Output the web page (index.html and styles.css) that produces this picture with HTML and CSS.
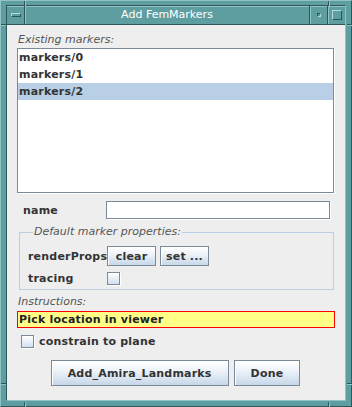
FILE: index.html
```html
<!DOCTYPE html>
<html lang="en">
<head>
    <meta charset="UTF-8">
    <title>Add FemMarkers</title>
    <link rel="stylesheet" href="styles.css">
</head>
<body>
    <div class="window">
        <div class="frame">
            <div class="titlebar">
                <div class="tb-btn tb-left"><span class="ico-min"></span></div>
                <div class="tb-title">Add FemMarkers</div>
                <div class="tb-btn"><span class="ico-dot"></span></div>
                <div class="tb-btn"><span class="ico-max"></span></div>
            </div>

            <div class="content">
                <div class="cap">Existing markers:</div>
                <div class="list">
                    <div class="item">markers/0</div>
                    <div class="item">markers/1</div>
                    <div class="item sel">markers/2</div>
                </div>

                <div class="row name-row">
                    <span class="lbl">name</span>
                    <span class="field"></span>
                </div>

                <fieldset class="group">
                    <legend>Default marker properties:</legend>
                    <div class="row">
                        <span class="lbl">renderProps</span>
                        <button class="btn small">clear</button>
                        <button class="btn small">set ...</button>
                    </div>
                    <div class="row tracing-row">
                        <span class="lbl">tracing</span>
                        <span class="chk"></span>
                    </div>
                </fieldset>

                <div class="cap instr">Instructions:</div>
                <div class="msg">Pick location in viewer</div>

                <div class="row plane-row">
                    <span class="chk"></span>
                    <span class="plain">constrain to plane</span>
                </div>

                <div class="actions">
                    <button class="btn big">Add_Amira_Landmarks</button>
                    <button class="btn big">Done</button>
                </div>
            </div>
        </div>

        <!-- resize corner marks on the frame -->
        <span class="tick v" style="left:23px; top:0"></span>
        <span class="tick v" style="left:327px; top:0"></span>
        <span class="tick v" style="left:23px; top:401px"></span>
        <span class="tick v" style="left:327px; top:401px"></span>
        <span class="tick h" style="left:0; top:23px"></span>
        <span class="tick h" style="left:346px; top:23px"></span>
        <span class="tick h" style="left:0; top:382px"></span>
        <span class="tick h" style="left:346px; top:382px"></span>
    </div>
</body>
</html>
```

FILE: styles.css
```css
body {
    margin: 0;
    background: #5f9ea0;
    font-family: "DejaVu Sans", sans-serif;
}
.window {
    position: relative;
    width: 352px;
    height: 407px;
    box-sizing: border-box;
    background: #5f9ea0;
    border: 1px solid;
    border-color: #92c3c4 #2d5758 #2d5758 #92c3c4;
    padding: 4px 5px 5px 5px;
    display: flex;
}
.frame {
    flex: 1;
    display: flex;
    flex-direction: column;
    border: 1px solid;
    border-color: #2d5758 #92c3c4 #92c3c4 #2d5758;
}
.titlebar {
    height: 19px;
    box-sizing: border-box;
    display: flex;
    border-bottom: 1px solid #2d5758;
}
.tb-btn {
    width: 17px;
    display: flex;
    align-items: center;
    justify-content: center;
    border-left: 1px solid #2d5758;
    box-shadow: inset 1px 1px 0 #92c3c4;
}
.tb-left {
    border-left: none;
    border-right: 1px solid #2d5758;
    box-shadow: inset 0 1px 0 #92c3c4;
}
.tb-title {
    flex: 1;
    text-align: center;
    color: #fff;
    font-family: "DejaVu Sans", sans-serif;
    font-size: 11px;
    line-height: 18px;
    box-shadow: inset 1px 1px 0 #92c3c4;
}
.ico-min {
    width: 10px;
    height: 4px;
    box-sizing: border-box;
    border: 1px solid;
    border-color: #b4dadb #2d5758 #2d5758 #b4dadb;
}
.ico-dot {
    width: 4px;
    height: 4px;
    box-sizing: border-box;
    border: 1px solid;
    border-color: #2d5758 #b4dadb #b4dadb #2d5758;
}
.ico-max {
    width: 10px;
    height: 10px;
    box-sizing: border-box;
    border: 1px solid;
    border-color: #b4dadb #2d5758 #2d5758 #b4dadb;
}
.tick {
    position: absolute;
    background: #2d5758;
}
.tick.v {
    width: 1px;
    height: 5px;
    box-shadow: 1px 0 0 #92c3c4;
}
.tick.h {
    width: 5px;
    height: 1px;
    box-shadow: 0 1px 0 #92c3c4;
}

.content {
    flex: 1;
    background: #eeeeee;
    padding: 7px 11px 0 10px;
    display: flex;
    flex-direction: column;
    color: #333;
    font-size: 11px;
    font-weight: bold;
    letter-spacing: 0.2px;
}
.cap {
    font-style: italic;
    font-weight: normal;
    font-size: 11px;
    line-height: 16px;
    letter-spacing: 0;
    color: #555;
    padding-left: 1px;
}
.list {
    height: 145px;
    box-sizing: border-box;
    background: #fff;
    border: 1px solid #7a8a99;
    box-shadow: 1px 1px 0 #fff;
}
.item {
    height: 17px;
    line-height: 17px;
    padding-left: 1px;
}
.item.sel {
    background: #b8cfe5;
}
.row {
    display: flex;
    align-items: center;
}
.lbl {
    box-sizing: border-box;
    width: 89px;
    padding-left: 6px;
}
.name-row {
    margin-top: 8px;
}
.field {
    width: 224px;
    height: 18px;
    box-sizing: border-box;
    background: #fff;
    border: 1px solid #7a8a99;
    box-shadow: 1px 1px 0 #fff;
}
.group {
    margin: 6px 0 0 2px;
    padding: 7px 0 2px 8px;
    border: 1px solid #b8cfe5;
}
.group legend {
    margin-left: 5px;
    padding: 0 1px;
    font-style: italic;
    font-weight: normal;
    font-size: 11px;
    line-height: 14px;
    letter-spacing: 0;
    color: #555;
}
.group .lbl {
    width: 79px;
    padding-left: 0;
}
.btn {
    font-family: "DejaVu Sans", sans-serif;
    font-weight: bold;
    font-size: 11px;
    letter-spacing: 0.2px;
    color: #333;
    border: 1px solid #7a8a99;
    border-radius: 0;
    background: linear-gradient(to bottom, #ffffff 0%, #eef3f9 40%, #c6d7e9 100%);
    box-shadow: inset 1px 1px 0 #fff;
    padding: 0;
}
.btn.small {
    width: 49px;
    height: 20px;
    margin-right: 4px;
}
.tracing-row {
    margin-top: 3px;
    height: 18px;
}
.chk {
    width: 13px;
    height: 13px;
    box-sizing: border-box;
    border: 1px solid #7a8a99;
    background: linear-gradient(to bottom, #ffffff, #d3e0ee);
    box-shadow: 1px 1px 0 #fff;
}
.instr {
    margin-top: 4px;
}
.msg {
    height: 17px;
    box-sizing: border-box;
    margin-top: 1px;
    margin-right: -1px;
    border: 1px solid #ff0000;
    background: #ffff88;
    line-height: 15px;
    padding-left: 1px;
    color: #222;
}
.plane-row {
    margin-top: 7px;
    padding-left: 4px;
    gap: 5px;
}
.actions {
    margin-top: 12px;
    display: flex;
    justify-content: center;
    gap: 5px;
}
.btn.big {
    height: 26px;
    padding: 0 16px;
}
```
